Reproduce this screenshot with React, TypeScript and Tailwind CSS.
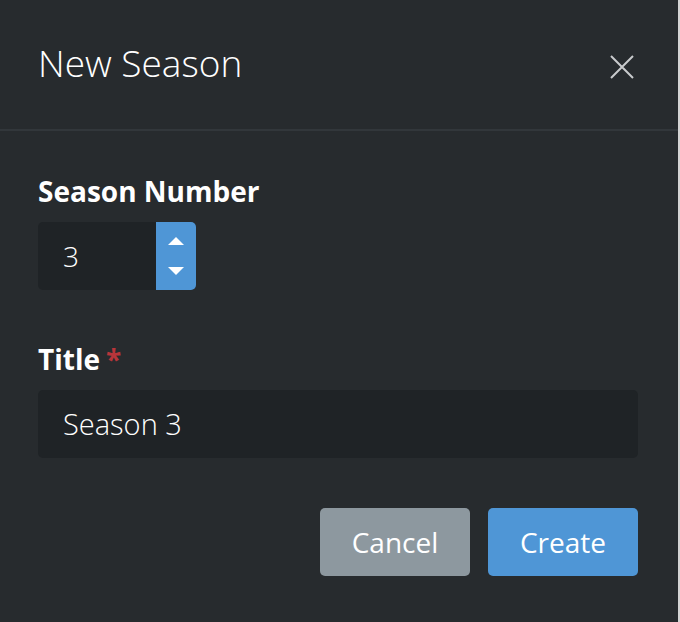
export default function App() {
  return (
    <div className="flex h-[622px] w-[680px] bg-[#d4d4d4] font-['Open_Sans',sans-serif]">
      <div className="flex h-full w-[678px] flex-col bg-[#272b2e] text-white">
        {/* header */}
        <div className="flex h-[131px] items-center justify-between border-b-2 border-[#32373b] pl-[38px] pr-[44px]">
          <h2 className="pb-[3px] text-[37px] font-light leading-[48px]">New Season</h2>
          <svg width="24" height="24" viewBox="0 0 24 24" className="mt-[4px]">
            <path d="M1 1 L23 23 M23 1 L1 23" stroke="#c9cbcd" strokeWidth="2" />
          </svg>
        </div>

        {/* body */}
        <div className="flex flex-col pl-[38px] pr-[40px] pt-[44px]">
          <label className="text-[28px] font-bold leading-[32px]">Season Number</label>
          <div className="mt-[15px] flex h-[68px] w-[158px] overflow-hidden rounded-[5px] bg-[#1f2326]">
            <div className="flex flex-1 items-center pl-[25px] text-[28px] font-light">3</div>
            <div className="flex w-[40px] flex-col items-center justify-center gap-[22px] bg-[#4f96d6]">
              <svg width="16" height="8" viewBox="0 0 16 8">
                <path d="M8 0 L16 8 L0 8 Z" fill="white" />
              </svg>
              <svg width="16" height="8" viewBox="0 0 16 8">
                <path d="M0 0 L16 0 L8 8 Z" fill="white" />
              </svg>
            </div>
          </div>

          <label className="mt-[53px] flex items-start gap-[6px] text-[28px] font-bold leading-[32px]">
            Title
            <span className="text-[#b8353a]">*</span>
          </label>
          <div className="mt-[15px] flex h-[68px] items-center rounded-[5px] bg-[#1f2326] pl-[25px] text-[29px] font-light">
            Season 3
          </div>

          <div className="mt-[50px] flex justify-end gap-[18px]">
            <button className="h-[68px] w-[150px] rounded-[5px] bg-[#8d989f] text-[28px] text-white">
              Cancel
            </button>
            <button className="h-[68px] w-[150px] rounded-[5px] bg-[#4f96d6] text-[28px] text-white">
              Create
            </button>
          </div>
        </div>
      </div>
    </div>
  );
}
